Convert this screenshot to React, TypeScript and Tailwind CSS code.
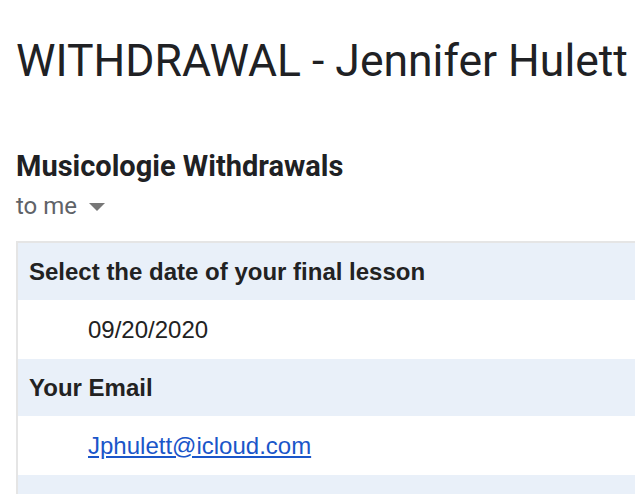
export default function App() {
  return (
    <div className="w-[635px] h-[494px] overflow-hidden bg-white">
      <div className="pl-4 pt-[36px]">
        <h1 className="text-[44.5px] leading-[50px] text-[#202124] font-['Roboto',sans-serif] font-normal whitespace-nowrap">
          WITHDRAWAL - Jennifer Hulett
        </h1>
        <div className="mt-[63px] font-['Roboto',sans-serif]">
          <div className="text-[29px] leading-[34px] font-bold text-[#202124] whitespace-nowrap">
            Musicologie Withdrawals
          </div>
          <div className="mt-[9px] flex items-center gap-[12px] text-[24px] leading-[28px] text-[#5f6368]">
            <span>to me</span>
            <svg width="16" height="9" viewBox="0 0 16 9" className="mt-[2px]">
              <path d="M0 0 L16 0 L8 8 Z" fill="#777" />
            </svg>
          </div>
        </div>
        <div className="mt-[21px] w-[700px] border-l-2 border-t-2 border-[#e5e5e5] font-['Liberation_Sans',Arial,sans-serif] text-[24px] text-[#222]">
          <div className="h-[57px] bg-[#e9f0f9] flex items-center pl-[11px] font-bold">
            Select the date of your final lesson
          </div>
          <div className="h-[59px] bg-white flex items-center pl-[70px]">09/20/2020</div>
          <div className="h-[57px] bg-[#e9f0f9] flex items-center pl-[11px] font-bold">
            Your Email
          </div>
          <div className="h-[59px] bg-white flex items-center pl-[70px]">
            <a href="#" className="text-[#1a56c9] underline">
              Jphulett@icloud.com
            </a>
          </div>
          <div className="h-[58px] bg-[#e9f0f9]" />
        </div>
      </div>
    </div>
  );
}
